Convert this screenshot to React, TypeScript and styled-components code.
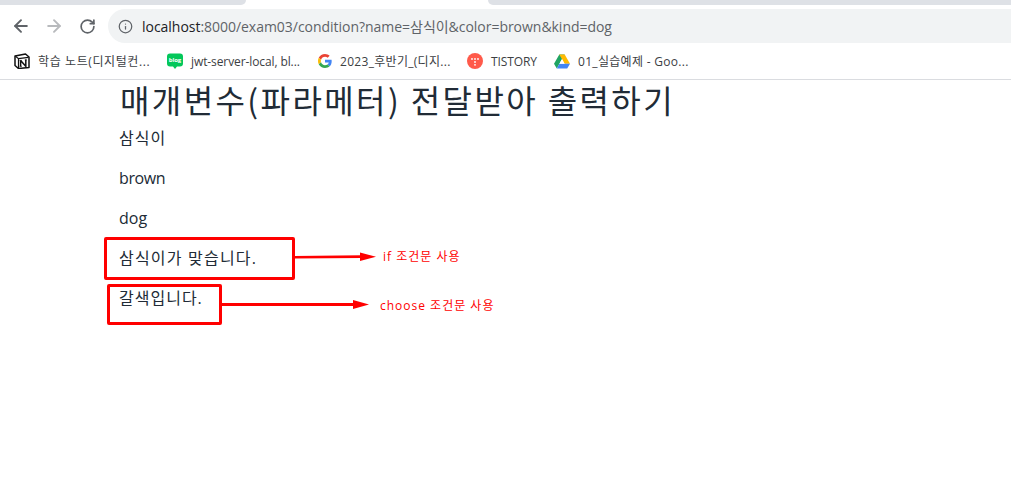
import React from "react";
import styled, { createGlobalStyle } from "styled-components";
import { ArrowLeft, ArrowRight, RotateCw, Info } from "lucide-react";

const GlobalStyle = createGlobalStyle`
    html, body {
        margin: 0;
        padding: 0;
        background: #ffffff;
    }
    body {
        font-family: "Open Sans", "Noto Sans CJK KR", sans-serif;
        overflow: hidden;
    }
`;

const Page = styled.div`
    position: relative;
    width: 1011px;
    height: 496px;
    overflow: hidden;
`;

const TabStrip = styled.div`
    display: flex;
    justify-content: space-between;
    height: 5px;
`;

const TabEdge = styled.div<{ $width: number; $side: "left" | "right" }>`
    width: ${(props) => props.$width}px;
    background: #dee1e6;
    border-bottom-${(props) => (props.$side === "left" ? "right" : "left")}-radius: 7px;
`;

const Toolbar = styled.div`
    display: flex;
    align-items: center;
    height: 42px;
    padding-left: 11px;
    gap: 13px;
`;

const NavButton = styled.div<{ $color: string }>`
    display: flex;
    width: 20px;
    height: 20px;
    align-items: center;
    justify-content: center;
    color: ${(props) => props.$color};
`;

const Omnibox = styled.div`
    flex: 1;
    display: flex;
    align-items: center;
    height: 34px;
    margin-left: -2px;
    margin-right: -20px;
    padding-left: 10px;
    gap: 9px;
    border-radius: 17px;
    background: #f1f3f4;
    color: #5f6368;
    font-size: 14px;
    letter-spacing: -0.03px;
`;

const Host = styled.span`
    color: #202124;
`;

const BookmarkBar = styled.div`
    display: flex;
    align-items: center;
    height: 28px;
    padding: 0 0 4px 14px;
    border-bottom: 1px solid #dadce0;
`;

const Bookmark = styled.div<{ $width: number; $spacing: number }>`
    display: flex;
    align-items: center;
    width: ${(props) => props.$width}px;
    gap: 8px;
    font-size: 12px;
    letter-spacing: ${(props) => props.$spacing}px;
    color: #3c4043;
    white-space: nowrap;
`;

const Content = styled.main`
    padding-left: 119px;
    color: #212b36;
    font-size: 16px;
    line-height: 24px;
    font-family: "Open Sans", "Noto Sans CJK KR", sans-serif;
`;

const Title = styled.h2`
    margin: 0 0 8px 1px;
    font-size: 32px;
    font-weight: 400;
    line-height: 38.4px;
    letter-spacing: 2.4px;
    font-family: "Noto Sans CJK KR", sans-serif;
`;

const Para = styled.p<{ $spacing?: number }>`
    margin: 0 0 16px;
    letter-spacing: ${(props) => props.$spacing ?? 0}px;
`;

const RedBox = styled.div<{ $x: number; $y: number; $w: number; $h: number }>`
    position: absolute;
    left: ${(props) => props.$x}px;
    top: ${(props) => props.$y}px;
    width: ${(props) => props.$w}px;
    height: ${(props) => props.$h}px;
    box-sizing: border-box;
    border: 3px solid #ff0000;
    border-radius: 2px;
`;

const Note = styled.span<{ $x: number; $y: number }>`
    position: absolute;
    left: ${(props) => props.$x}px;
    top: ${(props) => props.$y}px;
    color: #ff0000;
    font-size: 12px;
    line-height: 16px;
    letter-spacing: 1px;
    white-space: nowrap;
`;

const ArrowSvg = styled.svg`
    position: absolute;
    left: 0;
    top: 0;
`;

const NotionIcon = () => (
    <svg width="16" height="16" viewBox="0 0 16 16">
        <path d="M1 3 L11.5 1 L15 4 V14.5 L4.5 15.5 L1 12.5 Z" fill="#fff" stroke="#111" strokeWidth="1.5" strokeLinejoin="round" />
        <path d="M1.5 3.2 L4.5 5.6 L14.5 4.4 M4.5 5.6 V15" fill="none" stroke="#111" strokeWidth="1.2" />
        <path d="M6.6 7.5 V13.2 M6.6 7.5 L11.8 13.2 V6.8" fill="none" stroke="#111" strokeWidth="1.5" />
        <path d="M5.6 7.4 H7.6 M5.6 13.3 H7.8 M10.8 6.9 H12.8" stroke="#111" strokeWidth="0.9" />
    </svg>
);

const BlogIcon = () => (
    <svg width="16" height="17" viewBox="0 0 16 17">
        <path d="M3 0.5 H13 Q16 0.5 16 3.5 V10.5 Q16 13.5 13 13.5 H10 L8 16 L6 13.5 H3 Q0 13.5 0 10.5 V3.5 Q0 0.5 3 0.5 Z" fill="#03c75a" />
        <text x="8" y="9.3" fontSize="6" fontWeight="700" fontFamily="Open Sans, sans-serif" textAnchor="middle" fill="#fff">blog</text>
    </svg>
);

const GoogleIcon = () => (
    <svg width="14" height="14" viewBox="0 0 48 48">
        <path fill="#EA4335" d="M24 9.5c3.5 0 6.6 1.2 9.1 3.6l6.8-6.8C35.8 2.4 30.3 0 24 0 14.6 0 6.5 5.4 2.6 13.2l7.9 6.2C12.4 13.7 17.7 9.5 24 9.5z" />
        <path fill="#4285F4" d="M46.9 24.5c0-1.6-.1-3.1-.4-4.5H24v9h12.9c-.6 3-2.2 5.5-4.7 7.2l7.7 6c4.5-4.2 7-10.3 7-17.7z" />
        <path fill="#FBBC05" d="M10.5 28.6c-.5-1.4-.8-3-.8-4.6s.3-3.2.8-4.6l-7.9-6.2C.9 16.5 0 20.1 0 24s.9 7.5 2.6 10.8l7.9-6.2z" />
        <path fill="#34A853" d="M24 48c6.5 0 11.9-2.1 15.9-5.8l-7.7-6c-2.2 1.5-5 2.3-8.2 2.3-6.3 0-11.6-4.2-13.5-9.9l-7.9 6.2C6.5 42.6 14.6 48 24 48z" />
    </svg>
);

const TistoryIcon = () => (
    <svg width="16" height="16" viewBox="0 0 16 16">
        <circle cx="8" cy="8" r="8" fill="#ff5a4a" />
        <g fill="#fff">
            <circle cx="5" cy="6" r="0.9" />
            <circle cx="8" cy="6" r="0.9" />
            <circle cx="11" cy="6" r="0.9" />
            <circle cx="8" cy="9" r="0.9" />
            <circle cx="8" cy="11.8" r="0.9" />
        </g>
    </svg>
);

const DriveIcon = () => (
    <svg width="16" height="15" viewBox="0 0 16 15">
        <path d="M5.3 0.5 H10.7 L5.4 9.7 L2.8 14.5 L0 9.7 Z" fill="#1fa463" />
        <path d="M5.3 0.5 H10.7 L16 9.7 H10.6 Z" fill="#ffba00" />
        <path d="M5.4 9.7 H16 L13.2 14.5 H2.8 Z" fill="#4285f4" />
        <path d="M8 5 L10.6 9.7 H5.4 Z" fill="#fff" />
    </svg>
);

const App = () => {
    return (
        <Page>
            <GlobalStyle />
            <TabStrip>
                <TabEdge $width={246} $side="left" />
                <TabEdge $width={523} $side="right" />
            </TabStrip>
            <Toolbar>
                <NavButton $color="#5f6368"><ArrowLeft size={20} strokeWidth={2.3} /></NavButton>
                <NavButton $color="#b8babd"><ArrowRight size={20} strokeWidth={2.3} /></NavButton>
                <NavButton $color="#5f6368"><RotateCw size={17} strokeWidth={2.4} /></NavButton>
                <Omnibox>
                    <Info size={15} strokeWidth={2} color="#5f6368" />
                    <span><Host>localhost</Host>:8000/exam03/condition?name=삼식이&amp;color=brown&amp;kind=dog</span>
                </Omnibox>
            </Toolbar>
            <BookmarkBar>
                <Bookmark $width={153} $spacing={0.6}><NotionIcon />학습 노트(디지털컨...</Bookmark>
                <Bookmark $width={151} $spacing={-0.1}><BlogIcon />jwt-server-local, bl...</Bookmark>
                <Bookmark $width={149} $spacing={0.3}><GoogleIcon />2023_후반기_(디지...</Bookmark>
                <Bookmark $width={87} $spacing={-0.1}><TistoryIcon />TISTORY</Bookmark>
                <Bookmark $width={140} $spacing={0.3}><DriveIcon />01_실습예제 - Goo...</Bookmark>
            </BookmarkBar>
            <Content>
                <Title>매개변수(파라메터) 전달받아 출력하기</Title>
                <Para $spacing={1}>삼식이</Para>
                <Para $spacing={-0.4}>brown</Para>
                <Para>dog</Para>
                <Para $spacing={1.2}>삼식이가 맞습니다.</Para>
                <Para $spacing={1}>갈색입니다.</Para>
            </Content>
            <RedBox $x={104} $y={237} $w={191} $h={43} />
            <RedBox $x={107} $y={284} $w={115} $h={41} />
            <ArrowSvg width="1011" height="496">
                <path d="M294 257.2 L362 256.6" stroke="#ff0000" strokeWidth="2.6" fill="none" />
                <polygon points="360,252.5 376,256.8 360,261" fill="#ff0000" />
                <path d="M221 304.5 L355 304.5" stroke="#ff0000" strokeWidth="3" fill="none" />
                <polygon points="353,300 369,304.5 353,309" fill="#ff0000" />
            </ArrowSvg>
            <Note $x={383} $y={249}>if 조건문 사용</Note>
            <Note $x={380} $y={298}>choose 조건문 사용</Note>
        </Page>
    );
};

export default App;
